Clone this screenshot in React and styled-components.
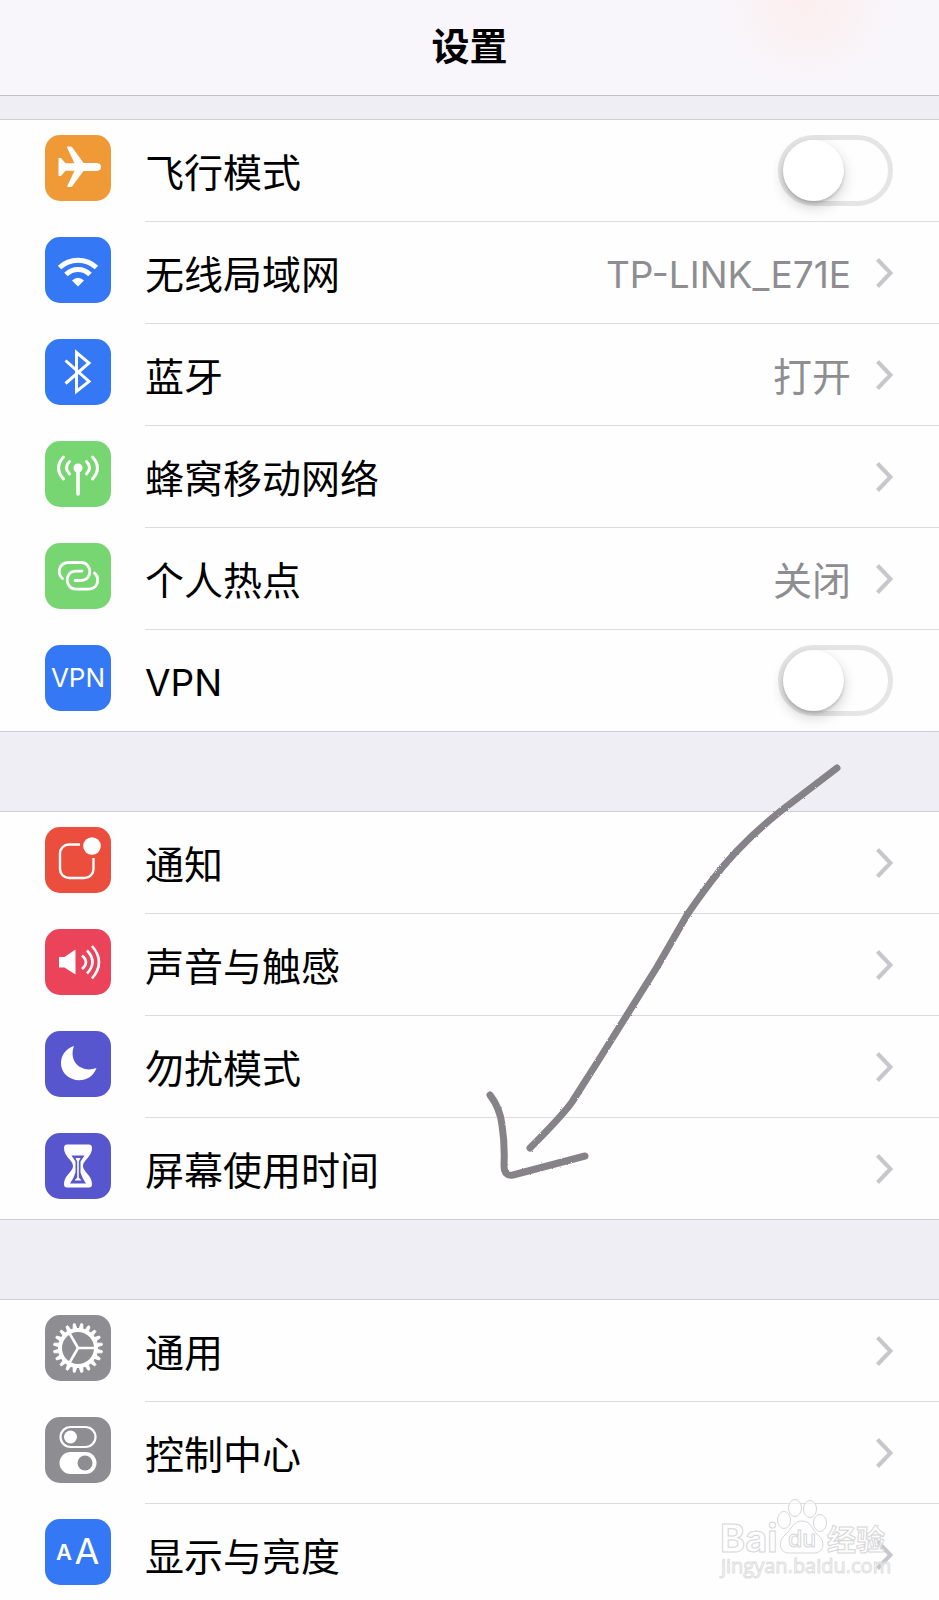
import React, { useState } from "react"
import styled, { createGlobalStyle } from "styled-components"

const colors = {
  orange: "#f09a37",
  blue: "#3478f6",
  green: "#77d672",
  red: "#eb4e3d",
  pink: "#eb445a",
  purple: "#5756ce",
  gray: "#8e8d92",
}

const GlobalStyle = createGlobalStyle`
  * {
    box-sizing: border-box;
  }

  body {
    margin: 0;
    background: #f0eef5;
    color: #000;
    font-family: Inter, "Noto Sans CJK SC", sans-serif;
  }
`

const Plane = () => (
  <path
    fill="#fff"
    d="M13.500 23h2.500l4.500 5.200H29.500L22 12.500q0-1 1-1h2.500q1 0 1.700.8L38.500 28H52q4 .5 4 4t-4 4H38.500L27.200 51.200q-.7.800-1.700.800H23q-1 0-.7-1L29.500 35.800h-9l-4.500 5.200H13.500z"
  />
)

const Wifi = () => (
  <>
    <path
      d="M14.500 30.500A27 27 0 0 1 51.500 30.500M21 37.500A17 17 0 0 1 45 37.500"
      fill="none"
      stroke="#fff"
      strokeWidth="5"
    />
    <path d="M27 43.500Q33 38 39 43.500L33 49.500Z" fill="#fff" />
  </>
)

const Bluetooth = () => (
  <path
    d="M20.500 21.500L44 42.500L31.500 52.500V13.500L44 24L20.500 44.500"
    fill="none"
    stroke="#fff"
    strokeWidth="3"
  />
)

const Cellular = () => (
  <g fill="none" stroke="#fff" strokeWidth="3" strokeLinecap="round">
    <circle cx="33" cy="27" r="4.500" fill="#fff" stroke="none" />
    <path d="M33 27V53" strokeWidth="3.600" />
    <path d="M24.500 20.500Q18.500 26.500 24.500 33M41.500 20.500Q47.500 26.500 41.500 33" />
    <path d="M18.500 16Q8.500 27 18.500 38M47.500 16Q57.500 27 47.500 38" />
  </g>
)

const Hotspot = () => {
  const ring = "M17.500 35.500C11.500 30 14 19.500 24 19.500H36C47.500 19.500 48 37.500 36 37.500H30"
  return (
    <g fill="none" stroke="#fff" strokeWidth="2.800" strokeLinecap="round">
      <path d={ring} />
      <path d={ring} transform="rotate(180 33.500 32.800)" />
    </g>
  )
}

const Vpn = () => (
  <text x="33" y="42" textAnchor="middle" fontSize="26" fill="#fff">
    VPN
  </text>
)

const Notifications = () => (
  <>
    <path
      d="M35 17.500H24a9 9 0 0 0-9 9V42a9 9 0 0 0 9 9H39.500a9 9 0 0 0 9-9V31"
      fill="none"
      stroke="#fff"
      strokeWidth="2.400"
    />
    <circle cx="47" cy="19" r="8.800" fill="#fff" />
  </>
)

const Sound = () => (
  <>
    <path d="M14 28h5.500L30.500 20.500V45.500L19.500 38.500H14z" fill="#fff" />
    <path
      d="M37 26.500Q45 33 37 40M42 21.500Q53 33 42 44.500M47 17Q61 33 47 49.500"
      fill="none"
      stroke="#fff"
      strokeWidth="2.600"
    />
  </>
)

const Moon = () => (
  <path
    d="M29 15C14.500 20 12.500 36 21.500 44.500C31 53 47 50 51.500 37C37 42.500 23 31 29 15Z"
    fill="#fff"
  />
)

const Hourglass = () => (
  <>
    <path
      d="M22 11.500H44Q47 11.500 47 15C47 24 38 27 38 33S47 42 47 51Q47 54.500 44 54.500H22Q19 54.500 19 51C19 42 28 39 28 33S19 24 19 15Q19 11.500 22 11.500Z"
      fill="#fff"
    />
    <path
      d="M26.500 22.500H39.500L35.500 28.500V39.500Q37 45 41 50.500H25Q29 45 30.500 39.500V28.500Z"
      fill={colors.purple}
    />
    <path d="M30.500 25H35.500L33.800 28.500V44.500L36.500 47.500H29.500L32.200 44.500V28.500Z" fill="#fff" />
  </>
)

const teeth = Array.from({ length: 20 }, (_, i) => i * 18 + 9)

const Gear = () => (
  <g fill="none" stroke="#fff" strokeWidth="2.600">
    <circle cx="33" cy="33" r="18" strokeWidth="4" />
    {teeth.map(angle => (
      <path
        key={angle}
        d="M51.500 31L57.500 32V34L51.500 35Z"
        fill="#fff"
        strokeWidth="0.800"
        transform={`rotate(${angle} 33 33)`}
      />
    ))}
    {[0, 120, 240].map(angle => (
      <path key={angle} d="M33 33H51" transform={`rotate(${angle} 33 33)`} />
    ))}
  </g>
)

const Switches = () => (
  <>
    <rect x="15.500" y="10" width="35" height="20" rx="10" fill="none" stroke="#fff" strokeWidth="2.200" />
    <circle cx="25.500" cy="20" r="6.500" fill="#fff" />
    <rect x="14.500" y="35" width="37" height="22" rx="11" fill="#fff" />
    <circle cx="40" cy="46" r="7.500" fill={colors.gray} />
  </>
)

const Letters = () => (
  <g fill="#fff" textAnchor="middle">
    <text x="19" y="41" fontSize="22" fontWeight="600">
      A
    </text>
    <text x="42" y="45" fontSize="36">
      A
    </text>
  </g>
)

const groups = [
  [
    { label: "飞行模式", color: colors.orange, icon: Plane, toggle: true },
    { label: "无线局域网", color: colors.blue, icon: Wifi, value: "TP-LINK_E71E", latinValue: true },
    { label: "蓝牙", color: colors.blue, icon: Bluetooth, value: "打开" },
    { label: "蜂窝移动网络", color: colors.green, icon: Cellular },
    { label: "个人热点", color: colors.green, icon: Hotspot, value: "关闭" },
    { label: "VPN", color: colors.blue, icon: Vpn, toggle: true, latinLabel: true },
  ],
  [
    { label: "通知", color: colors.red, icon: Notifications },
    { label: "声音与触感", color: colors.pink, icon: Sound },
    { label: "勿扰模式", color: colors.purple, icon: Moon },
    { label: "屏幕使用时间", color: colors.purple, icon: Hourglass },
  ],
  [
    { label: "通用", color: colors.gray, icon: Gear },
    { label: "控制中心", color: colors.gray, icon: Switches },
    { label: "显示与亮度", color: colors.blue, icon: Letters },
  ],
]

const Item = ({ label, color, icon: Icon, value, toggle, latinLabel, latinValue }) => {
  const [on, setOn] = useState(false)

  return (
    <Row as={toggle ? "label" : "a"} href={toggle ? undefined : "#"}>
      <Tile $color={color} viewBox="0 0 66 66" aria-hidden="true">
        <Icon />
      </Tile>
      <Body>
        <Label $latin={latinLabel}>{label}</Label>
        {value && <Value $latin={latinValue}>{value}</Value>}
        {toggle ? (
          <Switch type="checkbox" checked={on} onChange={() => setOn(!on)} />
        ) : (
          <Chevron viewBox="0 0 17 30" aria-hidden="true">
            <path d="M1.500 1.500L14.500 15L1.500 28.500" />
          </Chevron>
        )}
      </Body>
    </Row>
  )
}

const Arrow = () => (
  <Sketch viewBox="0 0 370 430" aria-hidden="true">
    <defs>
      <filter id="pencil" x="-5%" y="-5%" width="110%" height="110%">
        <feTurbulence type="fractalNoise" baseFrequency="0.700" numOctaves="2" />
        <feDisplacementMap in="SourceGraphic" scale="2" />
        <feGaussianBlur stdDeviation="0.600" />
      </filter>
    </defs>
    <g filter="url(#pencil)">
      <path d="M357 18L302 60Q258 95 230 133Q215 153 207 165L177 217L120 308L92 352Q82 366 50 398" />
      <path d="M10 345Q20 358 22 375Q25 395 24 415Q24 427 33 425L105 406" />
    </g>
  </Sketch>
)

const Watermark = () => (
  <Mark viewBox="0 0 170 90" aria-hidden="true">
    <g fontWeight="700">
      <text x="0" y="60" fontSize="38">
        Bai
      </text>
      <text x="107" y="59" fontSize="29">
        经验
      </text>
    </g>
    <ellipse cx="64" cy="28" rx="6.500" ry="8.500" />
    <ellipse cx="75" cy="16" rx="6.500" ry="8.500" />
    <ellipse cx="90" cy="17" rx="6.500" ry="8.500" />
    <ellipse cx="100" cy="31" rx="6.500" ry="8.500" />
    <path d="M82 29C92 29 92 39 98 43C106 49 104 61 94 61H69C59 61 58 49 65 43C72 37 73 29 82 29Z" />
    <text x="82" y="55" fontSize="23" fontWeight="500" textAnchor="middle">
      du
    </text>
    <Address x="1" y="81" fontSize="20">
      jingyan.baidu.com
    </Address>
  </Mark>
)

export default () => (
  <Screen>
    <GlobalStyle />
    <Header>
      <Title>设置</Title>
    </Header>
    <Scroller>
      <List>
        {groups.map((items, i) => (
          <Group key={i}>
            {items.map(item => (
              <Item key={item.label} {...item} />
            ))}
          </Group>
        ))}
        <Arrow />
      </List>
    </Scroller>
    <Watermark />
  </Screen>
)

const Screen = styled.div`
  position: relative;
  display: flex;
  flex-direction: column;
  height: 100vh;
  overflow: hidden;
`

const Header = styled.header`
  display: flex;
  flex: none;
  align-items: center;
  justify-content: center;
  height: 96px;
  padding-bottom: 4px;
  border-bottom: 1px solid #c0bfc5;
  background: radial-gradient(circle at 86% 0, #fceeee 0, rgba(252, 238, 238, 0) 90px),
    #f8f6fb;
`

const Title = styled.h1`
  margin: 0;
  font-size: 38px;
  font-weight: 700;
  line-height: 56px;
`

const Scroller = styled.main`
  flex: 1;
  min-height: 0;
  overflow-y: auto;
  scrollbar-width: none;
`

const List = styled.div`
  position: relative;
  display: flex;
  flex-direction: column;
  gap: 79px;
  padding-top: 23px;
`

const Group = styled.section`
  border-top: 1px solid #d0cfd5;
  border-bottom: 1px solid #d0cfd5;
  background: #fefefe;
`

const Body = styled.div`
  display: flex;
  flex: 1;
  align-items: center;
  border-bottom: 1px solid #dcdcdf;
  padding-right: 46px;
`

const Row = styled.a`
  display: flex;
  gap: 34px;
  height: 102px;
  padding-left: 45px;
  color: inherit;
  text-decoration: none;
  cursor: pointer;

  &:last-child {
    height: 101px;
  }

  &:last-child ${Body} {
    border-bottom: none;
  }
`

const Tile = styled.svg`
  flex: none;
  width: 66px;
  height: 66px;
  margin-top: 15px;
  border-radius: 15px;
  background: ${props => props.$color};
`

const Label = styled.span`
  flex: 1;
  padding-top: 5px;
  font-size: ${props => (props.$latin ? "37px" : "39px")};
  line-height: 56px;
`

const Value = styled.span`
  margin-right: 25px;
  padding-top: 5px;
  color: #8e8e92;
  font-size: ${props => (props.$latin ? "37px" : "39px")};
  line-height: 56px;
`

const Chevron = styled.svg`
  flex: none;
  width: 17px;
  height: 30px;
  fill: none;
  stroke: #c7c7cb;
  stroke-width: 4px;
`

const Switch = styled.input`
  flex: none;
  appearance: none;
  width: 115px;
  height: 71px;
  margin: 0;
  border: 5px solid #e5e5e6;
  border-radius: 36px;
  background: #fefefe;
  cursor: pointer;

  &::before {
    content: "";
    display: block;
    width: 61px;
    height: 61px;
    border-radius: 50%;
    background: #fff;
    box-shadow: 0 6px 14px rgba(0, 0, 0, 0.18), 0 2px 3px rgba(0, 0, 0, 0.16);
  }

  &:checked {
    border-color: #65c466;
    background: #65c466;
  }

  &:checked::before {
    margin-left: 44px;
  }
`

const Sketch = styled.svg`
  position: absolute;
  top: 654px;
  right: 89px;
  width: 370px;
  height: 430px;
  pointer-events: none;

  path {
    fill: none;
    stroke: #858388;
    stroke-width: 7px;
    stroke-linecap: round;
    stroke-linejoin: round;
  }
`

const Mark = styled.svg`
  position: absolute;
  right: 49px;
  bottom: 18px;
  width: 170px;
  height: 90px;
  overflow: visible;
  pointer-events: none;
  fill: rgba(255, 255, 255, 0.6);
  stroke: #d6d6d8;
  stroke-width: 1px;
`

const Address = styled.text`
  font-family: "Open Sans", sans-serif;
  stroke: #dededf;
`
